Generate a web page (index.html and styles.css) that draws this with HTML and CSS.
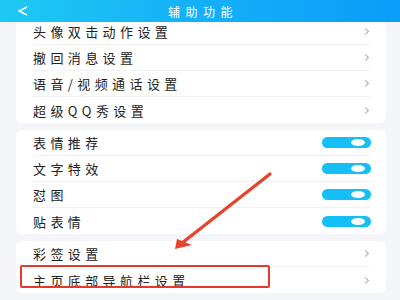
FILE: index.html
```html
<!DOCTYPE html>
<html lang="zh-CN">
<head>
  <meta charset="UTF-8" />
  <title>辅助功能</title>
  <link rel="stylesheet" href="styles.css">
</head>
<body>

  <div class="topbar">
    <svg class="back" width="12" height="10" viewBox="0 0 12 10">
      <polyline points="10,1 2,5 10,9" fill="none" stroke="#fff" stroke-width="1.4" />
    </svg>
    <div class="title">辅助功能</div>
  </div>

  <div class="page">
    <div class="card">
      <div class="row"><span>头像双击动作设置</span><i class="arrow"></i></div>
      <div class="row"><span>撤回消息设置</span><i class="arrow"></i></div>
      <div class="row"><span>语音/视频通话设置</span><i class="arrow"></i></div>
      <div class="row"><span>超级QQ秀设置</span><i class="arrow"></i></div>
    </div>

    <div class="card">
      <div class="row"><span>表情推荐</span><i class="switch"></i></div>
      <div class="row"><span>文字特效</span><i class="switch"></i></div>
      <div class="row"><span>怼图</span><i class="switch"></i></div>
      <div class="row"><span>贴表情</span><i class="switch"></i></div>
    </div>

    <div class="card">
      <div class="row"><span>彩签设置</span><i class="arrow"></i></div>
      <div class="row"><span>主页底部导航栏设置</span><i class="arrow"></i></div>
    </div>
  </div>

  <!-- annotation -->
  <div class="mark"></div>
  <svg class="pointer" width="400" height="300" viewBox="0 0 400 300">
    <line x1="270" y1="174" x2="182" y2="243" stroke="#e8432f" stroke-width="3.4" stroke-linecap="round" />
    <polygon points="175,249 177,239 192,245" fill="#e8432f" />
  </svg>

</body>
</html>
```

FILE: styles.css
```css
* {
  box-sizing: border-box;
  margin: 0;
  padding: 0;
}
body {
  width: 400px;
  height: 300px;
  overflow: hidden;
  background: #f4f5f9;
  font-family: "Noto Sans CJK SC", "Noto Sans", sans-serif;
  color: #222;
  position: relative;
}

/* Top bar */
.topbar {
  position: relative;
  z-index: 2;
  height: 22px;
  display: flex;
  align-items: center;
  justify-content: center;
  background: linear-gradient(90deg, #1ec9f3 0%, #14b0f8 50%, #0c9cf9 100%);
}
.back {
  position: absolute;
  left: 17px;
  top: 6px;
}
.title {
  color: #fff;
  font-size: 12px;
  letter-spacing: 5.5px;
  margin-left: 6px;
}

/* List */
.page {
  margin-top: -3px;
  display: flex;
  flex-direction: column;
  gap: 7px;
}
.card {
  background: #fff;
  border-radius: 6px;
  margin: 0 14px 0 16px;
}
.row {
  height: 26px;
  margin: 0 16px 0 17px;
  display: flex;
  align-items: center;
  justify-content: space-between;
  border-bottom: 1px solid #f1f1f4;
  font-size: 13px;
  letter-spacing: 4.4px;
}
.row:last-child {
  border-bottom: none;
}
.arrow {
  width: 5px;
  height: 5px;
  margin-right: 2px;
  border-top: 1px solid #aaa;
  border-right: 1px solid #aaa;
  transform: rotate(45deg);
}
.switch {
  position: relative;
  width: 49px;
  height: 11px;
  margin-right: -1px;
  border-radius: 6px;
  background: #13bff4;
}
.switch::after {
  content: "";
  position: absolute;
  right: 6px;
  top: 2px;
  width: 14px;
  height: 7px;
  border-radius: 50%;
  background: #fff;
}

/* Annotation overlay */
.mark {
  position: absolute;
  left: 20px;
  top: 265px;
  width: 250px;
  height: 23px;
  border: 2.5px solid #e5392d;
  border-radius: 2px;
}
.pointer {
  position: absolute;
  left: 0;
  top: 0;
}
```
